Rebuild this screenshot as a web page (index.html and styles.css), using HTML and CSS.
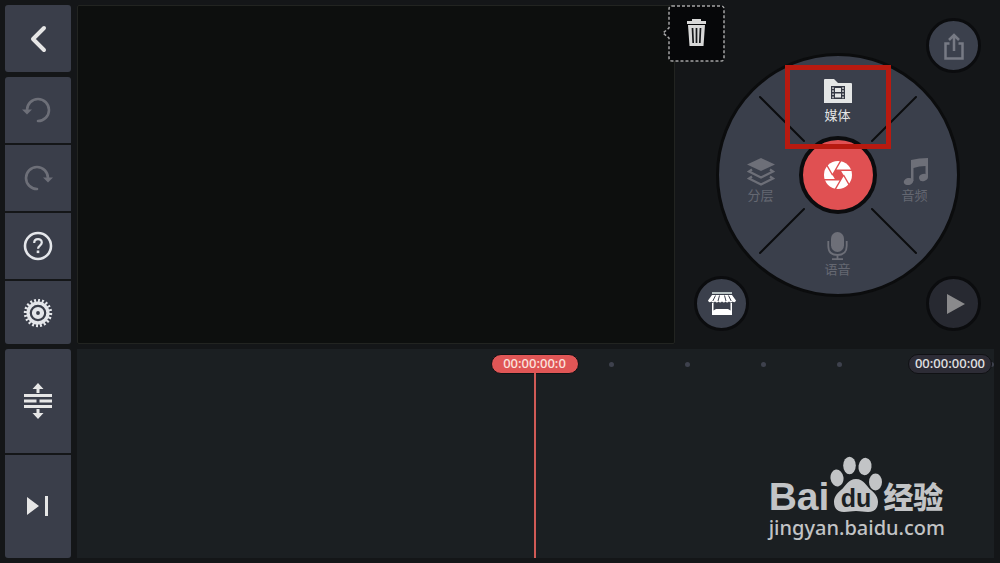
FILE: index.html
```html
<!DOCTYPE html>
<html lang="zh-CN">
	<head>
		<meta charset="utf-8">
		<meta name="viewport" content="width=device-width, initial-scale=1">
		<title>视频编辑</title>
		<link rel="stylesheet" href="styles.css">
	</head>
	<body>
		<div class="editor">
			<!-- 左侧工具栏 -->
			<nav class="side side_top">
				<button class="side_btn side_back" type="button" aria-label="返回">
					<svg width="32" height="32" viewBox="0 0 32 32"><path d="M22 5L11 16L22 27" fill="none" stroke="#e6e6e6" stroke-width="4" stroke-linecap="round" stroke-linejoin="round"/></svg>
				</button>
				<div class="side_group">
					<button class="side_btn" type="button" aria-label="撤销" disabled>
						<svg width="32" height="32" viewBox="0 0 32 32">
							<path d="M5 16A11 11 0 1 1 16 27" fill="none" stroke="#6d6f78" stroke-width="2.600" stroke-linecap="round"/>
							<path d="M0 15.500H10L5 20.500Z" fill="#6d6f78"/>
						</svg>
					</button>
					<button class="side_btn" type="button" aria-label="重做" disabled>
						<svg width="32" height="32" viewBox="0 0 32 32">
							<path d="M26 16A11 11 0 1 0 15 27" fill="none" stroke="#6d6f78" stroke-width="2.600" stroke-linecap="round"/>
							<path d="M31 15.500H21L26 20.500Z" fill="#6d6f78"/>
						</svg>
					</button>
					<button class="side_btn" type="button" aria-label="帮助">
						<svg width="32" height="32" viewBox="0 0 32 32">
							<circle cx="16" cy="16" r="13" fill="none" stroke="#e4e6ea" stroke-width="2.600"/>
							<path d="M12.200 13C12.200 7.900 19.800 7.900 19.800 12.600C19.800 15.600 16 15.600 16 18.800" fill="none" stroke="#e4e6ea" stroke-width="2.200"/>
							<rect x="14.700" y="20.500" width="2.600" height="2.600" fill="#e4e6ea"/>
						</svg>
					</button>
					<button class="side_btn side_set" type="button" aria-label="设置">
						<svg width="32" height="32" viewBox="0 0 32 32" fill="none" stroke="#e4e6ea">
							<circle cx="16" cy="16" r="12.500" stroke-width="3.400" pathLength="40" stroke-dasharray="1 1"/>
							<circle cx="16" cy="16" r="9.900" stroke-width="3.200"/>
							<circle cx="16" cy="16" r="4" stroke-width="4.200"/>
						</svg>
					</button>
				</div>
			</nav>

			<!-- 预览 -->
			<main class="preview">
				<button class="trash" type="button" aria-label="删除">
					<svg class="trash_frame" width="63" height="57" viewBox="0 0 63 57">
						<path d="M10 1H59Q62 1 62 4V53Q62 56 59 56H10Q7 56 7 53V33L1 28L7 23V4Q7 1 10 1Z" fill="#060709" stroke="#a4a4a4" stroke-width="1.500" stroke-dasharray="3 2"/>
						<path d="M25 16H44V19H25ZM30 14H39V16H30ZM26 20H43L41.500 41H27.500Z" fill="#d8d8d8"/>
						<path d="M30.500 23L31.200 38M34.500 23V38M38.500 23L37.800 38" stroke="#15171a" stroke-width="1.700"/>
					</svg>
				</button>
			</main>

			<!-- 转盘 -->
			<section class="panel">
				<div class="wheel">
					<svg class="wheel_lines" viewBox="0 0 238 238" stroke="#0b0c0e" stroke-width="2" stroke-linecap="round">
						<path d="M41 41L85 85M197 41L153 85M41 197L85 153M197 197L153 153"/>
					</svg>
					<button class="item item_media" type="button">
						<svg width="28" height="28" viewBox="0 0 28 28">
							<path d="M0 2Q0 1 1 1H10L14 5H27Q28 5 28 6V25H0Z" fill="#e4e6e6"/>
							<path d="M7 8H21V21H7Z" fill="#343844"/>
							<path d="M11 10H17V14H11ZM11 15.500H17V19.500H11Z" fill="#e4e6e6"/>
							<path d="M9 9.200V20.500M19 9.200V20.500" stroke="#e4e6e6" stroke-width="1.400" stroke-dasharray="1.700 1.400"/>
						</svg>
						<span>媒体</span>
					</button>
					<button class="item item_layer" type="button" disabled>
						<svg width="28" height="28" viewBox="0 0 28 28">
							<path d="M14 0L28 6.500L14 13L0 6.500Z" fill="#6d6f78"/>
							<path d="M5 11.500L2 13.500L14 19.500L26 13.500L23 11.500M5 18.500L2 20.500L14 26.500L26 20.500L23 18.500" fill="none" stroke="#6d6f78" stroke-width="2.200"/>
						</svg>
						<span>分层</span>
					</button>
					<button class="shutter" type="button" aria-label="拍摄">
						<svg width="28" height="28" viewBox="-14 -14 28 28">
							<circle r="14" fill="#fff"/>
							<path d="M5.500 0L2.750 4.760H-2.750L-5.500 0L-2.750 -4.760H2.750Z" fill="#e05052"/>
							<path d="M5.500 0L11.500 10.390M-2.750 -4.760L2.750 -4.760H14.750M-5.500 0L-2.750 -4.760L3.250 -15.150M-5.500 0L-11.500 -10.390M2.750 4.760H-14.750M5.500 0L2.750 4.760L-3.250 15.150" fill="none" stroke="#e05052" stroke-width="1.400"/>
						</svg>
					</button>
					<button class="item item_audio" type="button" disabled>
						<svg width="28" height="28" viewBox="0 0 28 28" fill="#6d6f78">
							<path d="M10 2Q18 0 27 0V19H24.500V8Q18 8 12.500 10V23H10Z"/>
							<ellipse cx="7.500" cy="23.500" rx="4.800" ry="3.500" transform="rotate(-15 7.500 23.500)"/>
							<ellipse cx="22.500" cy="19.500" rx="4.500" ry="3.500" transform="rotate(-15 22.500 19.500)"/>
						</svg>
						<span>音频</span>
					</button>
					<button class="item item_voice" type="button" disabled>
						<svg width="28" height="28" viewBox="0 0 28 28">
							<rect x="7" y="0" width="13" height="20" rx="6.500" fill="#6d6f78"/>
							<path d="M4.300 9V14Q4.300 23 13.500 23Q22.700 23 22.700 14V9M13.500 23V27M8 27.200H19" fill="none" stroke="#6d6f78" stroke-width="1.800"/>
						</svg>
						<span>语音</span>
					</button>
					<div class="mark"></div>
				</div>
				<button class="round round_share" type="button" aria-label="分享" disabled>
					<svg width="28" height="28" viewBox="0 0 28 28" fill="none" stroke="#777a84" stroke-width="2.500">
						<path d="M9.500 11.500H5.500V26.500H22.500V11.500H18.500M14 19V3.500M9 8L14 3L19 8"/>
					</svg>
				</button>
				<button class="round round_store" type="button" aria-label="商店">
					<svg width="28" height="28" viewBox="0 0 28 28">
						<path d="M4 2H24V4H4Z" fill="#b9c3c4"/>
						<path d="M4 5H24L28 10.500Q27 13.500 24.500 11.500Q23 13.500 21 11.500Q19 13.500 17.500 11.500Q16 13.500 14 11.500Q12 13.500 10.500 11.500Q9 13.500 7 11.500Q5 13.500 3.500 11.500Q1 13.500 0 10.500Z" fill="#fff"/>
						<path d="M7.500 5.500L4.800 11M11.500 5.500L10 11M16.500 5.500L18 11M20.500 5.500L23.200 11" stroke="#3b404c"/>
						<path d="M4 13H5.500V20.500L8 19H20L22.500 20.500V13H24V25H4Z" fill="#fff"/>
					</svg>
				</button>
				<button class="round round_play" type="button" aria-label="播放" disabled>
					<svg width="28" height="28" viewBox="0 0 28 28"><path d="M7 4L25 14L7 24Z" fill="#8a8a8c"/></svg>
				</button>
			</section>

			<nav class="side side_group">
				<button class="side_btn" type="button" aria-label="展开轨道">
					<svg width="28" height="38" viewBox="0 0 28 38" fill="#e6e6e6">
						<path d="M14 1L19.500 7H15.500V11H12.500V7H8.500ZM14 37L8.500 31H12.500V27H15.500V31H19.500Z"/>
						<path d="M0 12H28V15H0ZM0 17.500H12.500V20.500H0ZM15.500 17.500H28V20.500H15.500ZM0 23H28V26H0Z"/>
					</svg>
				</button>
				<button class="side_btn" type="button" aria-label="跳到结尾">
					<svg width="22" height="20" viewBox="0 0 22 20" fill="#e6e6e6"><path d="M0 1L12 10L0 19ZM18 0H21V20H18Z"/></svg>
				</button>
			</nav>

			<!-- 时间轴 -->
			<section class="timeline">
				<div class="ruler">
					<div class="timecode">00:00:00:0</div>
					<div class="dots"><i></i><i></i><i></i><i></i><i></i><i></i></div>
					<div class="total">00:00:00:00</div>
				</div>
				<div class="playhead"></div>
				<div class="logo">
					<div class="logo_top">
						<span class="logo_bai">Bai</span>
						<svg width="52" height="58" viewBox="0 0 52 58">
							<g fill="#c2c4c6">
								<ellipse cx="7" cy="22" rx="6.500" ry="8.500" transform="rotate(-8 7 22)"/>
								<ellipse cx="19.500" cy="9.500" rx="6.300" ry="8.700"/>
								<ellipse cx="35" cy="10.500" rx="6.500" ry="8.700" transform="rotate(8 35 10.500)"/>
								<ellipse cx="45.500" cy="26" rx="6.500" ry="8.500"/>
								<path d="M26 23C34 23 36 30 41 34C46 38 48 42 48 46C48 53 44 56 38 56C33 56 31 55 26 55C21 55 19 56 14 56C8 56 4 53 4 46C4 42 6 38 11 34C16 30 18 23 26 23Z"/>
							</g>
							<text class="logo_du" x="26" y="51" text-anchor="middle">du</text>
						</svg>
						<span class="logo_cn">经验</span>
					</div>
					<div class="logo_url">jingyan.baidu.com</div>
				</div>
			</section>
		</div>
	</body>
</html>
```

FILE: styles.css
```css
* {
	box-sizing: border-box;
}

body {
	margin: 0;
	background: #141618;
	font-family: "Noto Sans", "Noto Sans CJK SC", sans-serif;
}

button {
	margin: 0;
	padding: 0;
	border: 0;
	background: none;
	color: inherit;
	font: inherit;
	cursor: pointer;
}

button:disabled {
	cursor: default;
}

svg {
	display: block;
	flex: none;
}

.editor {
	display: grid;
	grid-template-columns: 66px minmax(0, 1fr) 313px;
	grid-template-rows: minmax(339px, 339fr) minmax(209px, 209fr);
	gap: 5px 6px;
	min-height: 100vh;
	padding: 5px 6px 5px 5px;
}

/* 左侧工具栏 */
.side_top {
	display: flex;
	flex-direction: column;
	gap: 5px;
}

.side_group {
	display: flex;
	flex-direction: column;
	gap: 2px;
	flex: 267;
	border-radius: 3px;
	overflow: hidden;
}

.side_btn {
	display: flex;
	flex: 66;
	align-items: center;
	justify-content: center;
	background: #3a3e4a;
}

.side_back {
	flex: 67;
	border-radius: 3px;
}

.side_set {
	flex: 63;
}

/* 预览 */
.preview {
	position: relative;
	border: 1px solid #222421;
	border-radius: 2px;
	background: #0d0f0e;
}

.trash {
	position: absolute;
	top: -1px;
	right: -51px;
	z-index: 2;
}

/* 转盘 */
.panel {
	display: grid;
	padding: 13px;
}

.panel > * {
	grid-area: 1 / 1;
}

.wheel {
	position: relative;
	place-self: center;
	display: grid;
	grid-template-columns: 84px 70px 84px;
	grid-template-rows: 84px 70px 84px;
	justify-items: center;
	align-items: center;
	margin: 0 -16px;
	border: 3px solid #0b0c0d;
	border-radius: 50%;
	background: #3a3f4b;
}

.wheel_lines {
	position: absolute;
	inset: 0;
}

.item {
	position: relative;
	display: flex;
	flex-direction: column;
	align-items: center;
	padding-top: 6px;
	color: #e4e6e6;
	font-size: 13px;
	line-height: 18px;
}

.item:disabled {
	color: #656872;
}

.item_media {
	grid-area: 1 / 2;
}

.item_layer {
	grid-area: 2 / 1;
	padding-top: 12px;
}

.item_audio {
	grid-area: 2 / 3;
	padding-top: 12px;
}

.item_voice {
	grid-area: 3 / 2;
}

.shutter {
	position: relative;
	grid-area: 2 / 2;
	display: flex;
	align-items: center;
	justify-content: center;
	width: 78px;
	height: 78px;
	margin: 0 -4px;
	border: 4px solid #0b0c0e;
	border-radius: 50%;
	background: #e05052;
}

.mark {
	position: absolute;
	top: 9px;
	left: 66px;
	width: 106px;
	height: 84px;
	border: 5px solid #b81a10;
	pointer-events: none;
}

.round {
	display: flex;
	align-items: center;
	justify-content: center;
	width: 55px;
	height: 55px;
	border: 3px solid #0b0c0e;
	border-radius: 50%;
	background: #3b404c;
}

.round_share {
	place-self: start end;
}

.round_store {
	place-self: end start;
}

.round_play {
	place-self: end end;
	background: #272931;
}

/* 时间轴 */
.timeline {
	position: relative;
	grid-column: 2 / 4;
	overflow: hidden;
	background: #1b1f22;
}

.ruler {
	position: relative;
	display: grid;
	grid-template-columns: 1fr 88px 1fr;
	align-items: center;
	padding: 5px 2px 0 0;
}

.timecode,
.total {
	height: 20px;
	border: 1px solid #101114;
	border-radius: 10px;
	font-size: 13px;
	font-weight: 500;
	line-height: 17px;
	text-align: center;
}

.timecode {
	grid-column: 2;
	background: #e05656;
	color: #fbe3de;
}

.total {
	position: absolute;
	right: 2px;
	bottom: 0;
	width: 84px;
	background: #2d2c36;
	color: #e2e2e4;
}

.dots {
	display: flex;
	gap: 71px;
	padding-left: 30px;
	min-width: 0;
}

.dots i {
	flex: none;
	width: 5px;
	height: 5px;
	border-radius: 50%;
	background: #3e414d;
}

.playhead {
	position: absolute;
	top: 24px;
	bottom: 0;
	left: 50%;
	width: 2px;
	margin-left: -2px;
	background: #d05a56;
}

/* 水印 */
.logo {
	position: absolute;
	right: 49px;
	bottom: 16px;
	color: #c2c4c6;
}

.logo_top {
	display: flex;
	align-items: flex-end;
	gap: 1px;
}

.logo_bai {
	font: bold 39px/34px "Liberation Sans", sans-serif;
}

.logo_du {
	fill: #1b1f22;
	font: bold 25px "Liberation Sans", sans-serif;
}

.logo_cn {
	font: 900 30px/38px "Noto Sans CJK SC", sans-serif;
}

.logo_url {
	font-size: 20px;
	font-weight: 500;
	line-height: 28px;
}
```
